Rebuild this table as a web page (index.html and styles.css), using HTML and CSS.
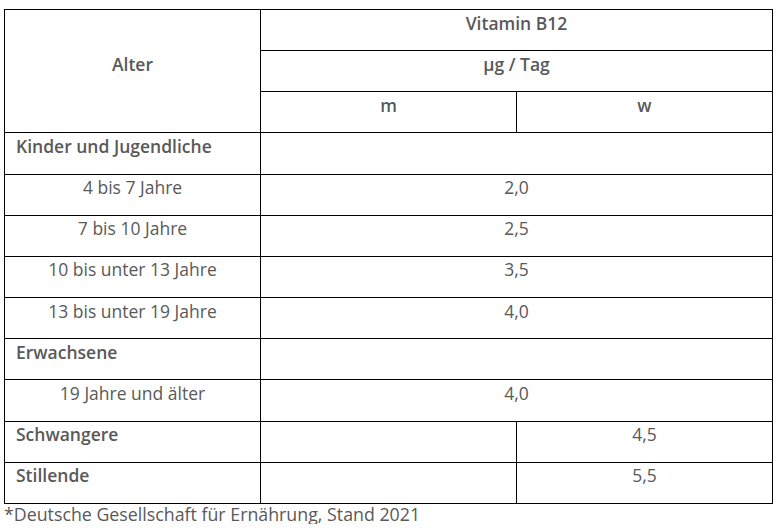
FILE: index.html
```html
<!DOCTYPE html>
<html lang="de">
<head>
<meta charset="utf-8">
<title>Vitamin B12</title>
<link rel="stylesheet" href="styles.css">
</head>
<body>
<table class="dri">
  <colgroup><col class="c"><col class="c"><col class="c"></colgroup>
  <thead>
    <tr><th rowspan="3" class="age-head">Alter</th><th colspan="2">Vitamin B12</th></tr>
    <tr><th colspan="2">µg / Tag</th></tr>
    <tr><th>m</th><th>w</th></tr>
  </thead>
  <tbody>
    <tr><td class="label">Kinder und Jugendliche</td><td colspan="2"></td></tr>
    <tr><td class="age">4 bis 7 Jahre</td><td colspan="2" class="val">2,0</td></tr>
    <tr><td class="age">7 bis 10 Jahre</td><td colspan="2" class="val">2,5</td></tr>
    <tr><td class="age">10 bis unter 13 Jahre</td><td colspan="2" class="val">3,5</td></tr>
    <tr><td class="age">13 bis unter 19 Jahre</td><td colspan="2" class="val">4,0</td></tr>
    <tr><td class="label">Erwachsene</td><td colspan="2"></td></tr>
    <tr><td class="age">19 Jahre und älter</td><td colspan="2" class="val">4,0</td></tr>
    <tr><td class="label">Schwangere</td><td></td><td class="val">4,5</td></tr>
    <tr><td class="label">Stillende</td><td></td><td class="val">5,5</td></tr>
  </tbody>
</table>
<p class="note">*Deutsche Gesellschaft für Ernährung, Stand 2021</p>
</body>
</html>
```
FILE: styles.css
```css
html, body {
  margin: 0;
  padding: 0;
  background: #fff;
}
body {
  font-family: "Open Sans", "Lato", "Liberation Sans", sans-serif;
  font-size: 17.5px;
  color: #595959;
  padding: 9px 0 0 4px;
}
.dri {
  border-collapse: collapse;
  table-layout: fixed;
  width: 769px;
}
.dri .c { width: 256px; }
.dri tr { height: 41.17px; }
.dri th, .dri td {
  border: 1px solid #000;
  padding: 1.5px 11px 0;
  line-height: 22px;
  vertical-align: top;
  text-align: center;
}
.dri th { font-weight: 600; }
.dri th.age-head {
  vertical-align: middle;
  padding-bottom: 16px;
}
.dri td.label {
  text-align: left;
  font-weight: 600;
}
.note {
  margin: 0;
  padding-top: 0.5px;
  font-size: 17.8px;
  line-height: 20px;
}
```
